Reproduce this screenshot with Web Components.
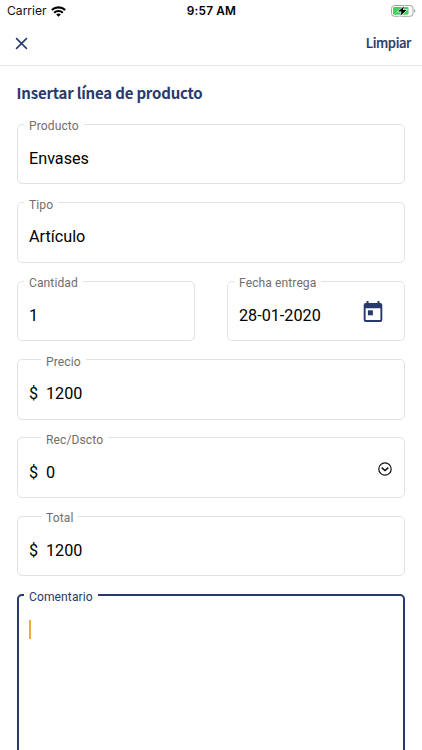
<!DOCTYPE html>
<html lang="es">
<head>
<meta charset="utf-8">
<title>Insertar línea de producto</title>
<style>
html, body { margin: 0; height: 100%; background: #fff; overflow: hidden; }
</style>
</head>
<body>
<product-page></product-page>
<script>
class BaseElement extends HTMLElement {
  constructor() {
    super();
    this.attachShadow({ mode: 'open' }).innerHTML = this.template();
  }
}

class StatusBar extends BaseElement {
  template() {
    return `<style>
      :host { display: grid; grid-template-columns: 1fr auto 1fr; align-items: center; height: 22px;
        padding: 0 6px 0 7px; box-sizing: border-box; font: 12.1px/22px Inter, sans-serif; color: #111; }
      .left { display: flex; align-items: center; gap: 4px; }
      .time { font-weight: 600; font-size: 11.8px; letter-spacing: .2px; color: #000; }
      .right { display: flex; justify-content: flex-end; }
      svg { display: block; }
    </style>
    <div class="left"><span>Carrier</span>
      <svg width="15" height="11" viewBox="0 0 15 11" fill="none" stroke="#000" stroke-width="2.1">
        <path d="M.8 4.1a9.6 9.6 0 0 1 13.4 0M3.2 6.7a6.1 6.1 0 0 1 8.6 0"/>
        <path d="M7.5 10.8 5.2 8.5a3.4 3.4 0 0 1 4.6 0z" fill="#000" stroke="none"/>
      </svg></div>
    <span class="time">9:57 AM</span>
    <div class="right"><svg width="25" height="12" viewBox="0 0 25 12">
      <rect x=".5" y=".5" width="21.5" height="10.8" rx="3" fill="#fff" stroke="#a5a5a5"/>
      <rect x="2" y="2" width="15.5" height="7.8" rx="1.4" fill="#44d265"/>
      <path d="M23.2 4v3.8c1.5-.5 1.5-3.3 0-3.8" fill="#999"/>
      <path d="M13 1.2 7 6.6h3.6L9.4 10.7l6.2-5.6H12z" fill="#000" stroke="#fff" stroke-width="1.1" paint-order="stroke"/>
    </svg></div>`;
  }
}

class NavBar extends BaseElement {
  template() {
    return `<style>
      :host { display: flex; justify-content: space-between; align-items: center; height: 44px; box-sizing: border-box;
        padding: 0 11px 0 15px; border-bottom: 1px solid #e6e6e6; color: #283a6b;
        font: 500 13px/20px "Noto Sans CJK JP", sans-serif; letter-spacing: -.4px; }
      svg { display: block; }
      span { margin-top: -1px; -webkit-text-stroke: .2px currentColor; }
    </style>
    <svg width="13" height="13" viewBox="0 0 13 13" fill="none" stroke="currentColor" stroke-width="1.5"><path d="m1.1 1.1 10.8 10.8M11.9 1.1 1.1 11.9"/></svg>
    <span><slot></slot></span>`;
  }
}

class OutlinedField extends BaseElement {
  template() {
    return `<style>
      :host { display: block; min-width: 0; height: 69px; color: #000; font: 16.2px/20px Roboto, sans-serif; }
      fieldset { display: block; box-sizing: border-box; height: 100%; min-width: 0; margin: 0; padding: 0 11px;
        border: 1px solid #e2e2e2; border-radius: 5px; }
      legend { height: 14px; padding: 4px 5px 0; margin-left: -5px; font-size: 12.1px; line-height: 14px;
        color: #6f6f6f; letter-spacing: .08px; }
      .row { display: flex; align-items: center; height: 40px; padding-top: 5.6px; }
      .prefix:not(:empty) { width: 17px; }
      .prefix:empty { display: none; }
      .value { flex: 1; }
      :host([prefix]) legend { margin-left: 12px; }
      :host([focused]) fieldset { border: 2px solid #283a6b; padding: 0 10px; }
      :host([focused]) legend { color: #283a6b; }
      :host([focused]) { height: 220px; }
    </style>
    <fieldset><legend></legend><div class="row"><span class="prefix"></span><span class="value"><slot></slot></span><slot name="icon"></slot></div></fieldset>`;
  }
  connectedCallback() {
    this.shadowRoot.querySelector('legend').textContent = this.getAttribute('label');
    this.shadowRoot.querySelector('.prefix').textContent = this.getAttribute('prefix') || '';
  }
}

class CalendarIcon extends BaseElement {
  template() {
    return `<style>:host { display: block; margin: -7px 10px 0 0; } svg { display: block; }</style>
    <svg width="20" height="22" viewBox="0 0 20 22" fill="#283a6b">
      <path fill-rule="evenodd" d="M3.5 0h2v2h9V0h2v2h.8A2 2 0 0 1 19.3 4v15a2 2 0 0 1-2 2H2.7a2 2 0 0 1-2-2V4a2 2 0 0 1 2-2h.8zM2.6 7.2V19h14.8V7.2z"/>
      <rect x="4.9" y="9.3" width="5" height="5"/>
    </svg>`;
  }
}

class ChevronCircle extends BaseElement {
  template() {
    return `<style>:host { display: block; margin: -7px 1px 0 0; } svg { display: block; }</style>
    <svg width="14" height="14" viewBox="0 0 14 14" fill="none" stroke="#111">
      <circle cx="7" cy="7" r="6.2" stroke-width="1.2"/><path d="m3.7 5.6 3.3 3 3.3-3" stroke-width="1.5"/>
    </svg>`;
  }
}

class TextCaret extends BaseElement {
  template() {
    return `<style>:host { display: block; width: 2px; height: 19px; margin-top: 0; background: #e9ac42; }</style>`;
  }
}

class ProductPage extends BaseElement {
  template() {
    return `<style>
      :host { display: block; height: 100%; overflow: hidden; }
      h1 { margin: 0; height: 50px; padding: 1px 0 0 16.5px; box-sizing: border-box; color: #283a6b;
        font: 700 15px/51px "Noto Sans CJK JP", sans-serif; letter-spacing: -.2px; }
      form { display: flex; flex-direction: column; gap: 9.4px; padding: 0 17px; margin-top: -.6px; }
      .pair { display: grid; grid-template-columns: 178px 178px; justify-content: space-between; }
    </style>
    <status-bar></status-bar>
    <nav-bar>Limpiar</nav-bar>
    <h1>Insertar línea de producto</h1>
    <form>
      <outlined-field label="Producto">Envases</outlined-field>
      <outlined-field label="Tipo">Artículo</outlined-field>
      <div class="pair">
        <outlined-field label="Cantidad">1</outlined-field>
        <outlined-field label="Fecha entrega">28-01-2020<calendar-icon slot="icon"></calendar-icon></outlined-field>
      </div>
      <outlined-field label="Precio" prefix="$">1200</outlined-field>
      <outlined-field label="Rec/Dscto" prefix="$">0<chevron-circle slot="icon"></chevron-circle></outlined-field>
      <outlined-field label="Total" prefix="$">1200</outlined-field>
      <outlined-field label="Comentario" focused><text-caret></text-caret></outlined-field>
    </form>`;
  }
}

customElements.define('status-bar', StatusBar);
customElements.define('nav-bar', NavBar);
customElements.define('outlined-field', OutlinedField);
customElements.define('calendar-icon', CalendarIcon);
customElements.define('chevron-circle', ChevronCircle);
customElements.define('text-caret', TextCaret);
customElements.define('product-page', ProductPage);
</script>
</body>
</html>
